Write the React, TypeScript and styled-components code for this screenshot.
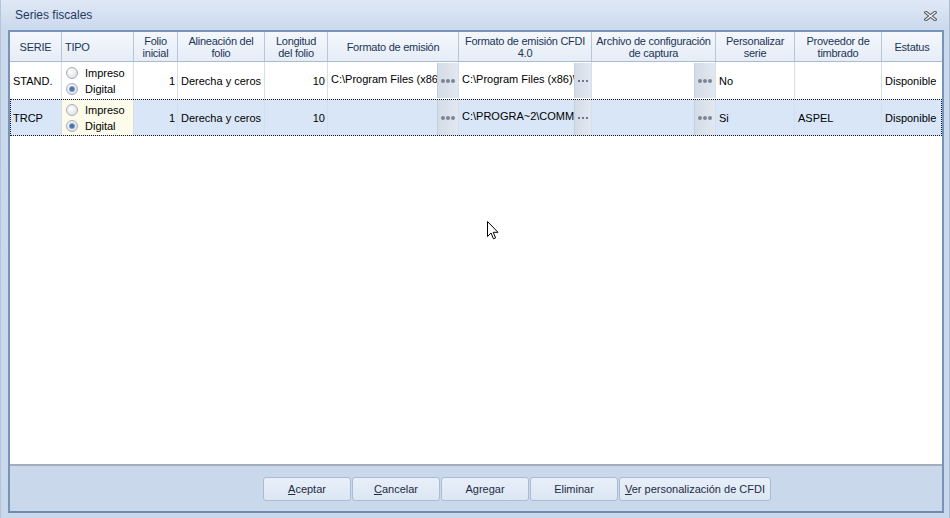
import React from 'react';
import styled, { createGlobalStyle, css } from 'styled-components';

const GlobalStyle = createGlobalStyle`
  html, body {
    margin: 0;
    padding: 0;
    background: #c9d8ec;
  }
  * {
    box-sizing: border-box;
  }
`;

// column widths of the grid, the last one takes what is left
const COLS = '52px 72px 44px 87px 63px 131px 133px 124px 79px 87px 1fr';

const WindowStyled = styled.div`
  position: relative;
  width: 950px;
  height: 518px;
  display: flex;
  flex-direction: column;
  background: linear-gradient(#dfe8f5 0px, #cbd9ed 30px, #cad8ec 100%);
  border-left: 1px solid #b4c4da;
  border-right: 1px solid #a9bbd3;
  font-family: 'Liberation Sans', Arial, sans-serif;
  font-size: 11px;
  color: #000;
  overflow: hidden;
`;

const TitleBar = styled.div`
  height: 30px;
  flex: none;
  display: flex;
  align-items: center;
  justify-content: space-between;
  padding: 0 12px 0 14px;
`;

const Title = styled.span`
  font-size: 12px;
  color: #1e3a5f;
  margin-top: -1px;
`;

const CloseButton = styled.div`
  width: 14px;
  height: 12px;
  display: flex;
  align-items: center;
  justify-content: center;
  margin-top: 2px;
`;

const Frame = styled.div`
  flex: 1;
  margin: 0 5px 5px 7px;
  border: 2px solid #7893b8;
  border-bottom-color: #6f8ab0;
  display: flex;
  flex-direction: column;
  min-height: 0;
`;

const GridArea = styled.div`
  flex: 1;
  background: #fff;
  border-bottom: 2px solid #a4adb9;
  display: flex;
  flex-direction: column;
`;

const Row = styled.div<{ $head?: boolean; $selected?: boolean }>`
  display: grid;
  grid-template-columns: ${COLS};
  height: ${({ $head }) => ($head ? '30px' : '37px')};
  ${({ $head }) =>
    $head &&
    css`
      background: linear-gradient(#f4f7fc, #e6edf7);
      border-bottom: 1px solid #a9bbd2;
      color: #1c3557;
    `}
  ${({ $selected }) =>
    $selected &&
    css`
      background: #d9e6f7;
      outline: 1px dotted #1a1a1a;
      outline-offset: -1px;
    `}
`;

const HeadCell = styled.div<{ $left?: boolean }>`
  display: flex;
  align-items: center;
  justify-content: ${({ $left }) => ($left ? 'flex-start' : 'center')};
  text-align: ${({ $left }) => ($left ? 'left' : 'center')};
  padding: 0 3px;
  line-height: 12px;
  letter-spacing: -0.25px;
  border-right: 1px solid #b7c6da;
  white-space: pre;
  overflow: hidden;
  &:last-child {
    border-right: none;
  }
`;

const Cell = styled.div<{ $align?: 'left' | 'right'; $focus?: boolean }>`
  display: flex;
  align-items: center;
  justify-content: ${({ $align }) => ($align === 'right' ? 'flex-end' : 'flex-start')};
  padding: 0 2px 0 3px;
  border-right: 1px solid #d5dfec;
  white-space: nowrap;
  overflow: hidden;
  min-width: 0;
  ${({ $focus }) =>
    $focus &&
    css`
      background: #fdfbea;
      margin: 1px 0;
    `}
  &:last-child {
    border-right: none;
  }
`;

const PathCell = styled.div`
  display: flex;
  align-items: stretch;
  border-right: 1px solid #d5dfec;
  min-width: 0;
  overflow: hidden;
`;

const PathText = styled.span`
  flex: 1;
  min-width: 0;
  overflow: hidden;
  white-space: nowrap;
  text-overflow: clip;
  line-height: 35px;
  padding-left: 3px;
`;

const EllipsisButton = styled.div<{ $tall?: boolean }>`
  width: ${({ $tall }) => ($tall ? '21px' : '17px')};
  flex: none;
  display: flex;
  align-items: center;
  justify-content: center;
  gap: ${({ $tall }) => ($tall ? '1px' : '2px')};
  background: linear-gradient(90deg, #d4dce8, #e2e8f0);
  border-left: 1px solid #c3cedc;
  margin: 1px 0;
`;

const Dot = styled.i<{ $dark?: boolean }>`
  display: block;
  width: ${({ $dark }) => ($dark ? '2px' : '4px')};
  height: ${({ $dark }) => ($dark ? '2px' : '4px')};
  border-radius: 50%;
  background: ${({ $dark }) => ($dark ? '#485467' : '#7c8594')};
`;

const RadioGroup = styled.div`
  display: flex;
  flex-direction: column;
  gap: 3px;
  padding-left: 1px;
`;

const RadioLine = styled.label`
  display: flex;
  align-items: center;
  gap: 7px;
  height: 13px;
`;

const Footer = styled.div`
  height: 45px;
  flex: none;
  display: flex;
  align-items: center;
  padding: 1px 0 0 253px;
  gap: 1px;
`;

const Button = styled.button<{ $wide?: boolean }>`
  width: ${({ $wide }) => ($wide ? '152px' : '88px')};
  height: 24px;
  font-family: 'Liberation Sans', Arial, sans-serif;
  font-size: 11px;
  color: #1d2c44;
  background: linear-gradient(#e8eff9, #dce6f4);
  border: 1px solid #aabcd4;
  border-radius: 3px;
  padding: 0;
  u {
    text-decoration: underline;
  }
`;

const Cursor = styled.svg`
  position: absolute;
  left: 486px;
  top: 221px;
`;

function Radio({ checked }: { checked?: boolean }) {
  return (
    <svg width="12" height="12" viewBox="0 0 12 12">
      <defs>
        <radialGradient id={checked ? 'rOn' : 'rOff'} cx="0.4" cy="0.4" r="0.7">
          <stop offset="0" stopColor="#ffffff" />
          <stop offset="1" stopColor={checked ? '#d4dbe4' : '#d9dde2'} />
        </radialGradient>
      </defs>
      <circle cx="6" cy="6" r="5.5" fill={`url(#${checked ? 'rOn' : 'rOff'})`} stroke="#a7aeb8" />
      {checked && <circle cx="6" cy="6" r="2.6" fill="#4c72ad" stroke="#7f9dca" strokeWidth="0.8" />}
    </svg>
  );
}

function Tipo({ focus }: { focus?: boolean }) {
  return (
    <Cell $focus={focus}>
      <RadioGroup>
        <RadioLine>
          <Radio />
          Impreso
        </RadioLine>
        <RadioLine>
          <Radio checked />
          Digital
        </RadioLine>
      </RadioGroup>
    </Cell>
  );
}

function Ellipsis({ dark }: { dark?: boolean }) {
  return (
    <EllipsisButton $tall={!dark}>
      <Dot $dark={dark} />
      <Dot $dark={dark} />
      <Dot $dark={dark} />
    </EllipsisButton>
  );
}

function PathField({ value, dark }: { value: string; dark?: boolean }) {
  return (
    <PathCell>
      <PathText>{value}</PathText>
      <Ellipsis dark={dark} />
    </PathCell>
  );
}

const headers: { text: string; left?: boolean }[] = [
  { text: 'SERIE' },
  { text: 'TIPO', left: true },
  { text: 'Folio\ninicial' },
  { text: 'Alineación del\nfolio' },
  { text: 'Longitud\ndel folio' },
  { text: 'Formato de emisión' },
  { text: 'Formato de emisión CFDI\n4.0' },
  { text: 'Archivo de configuración\nde captura' },
  { text: 'Personalizar\nserie' },
  { text: 'Proveedor de\ntimbrado' },
  { text: 'Estatus' },
];

type Serie = {
  serie: string;
  folio: number;
  alineacion: string;
  longitud: number;
  formato: string;
  cfdi: string;
  archivo: string;
  personalizar: string;
  proveedor: string;
  estatus: string;
};

const series: Serie[] = [
  {
    serie: 'STAND.',
    folio: 1,
    alineacion: 'Derecha y ceros',
    longitud: 10,
    formato: 'C:\\Program Files (x86)\\Common Files\\Aspel\\Sistemas Aspel\\SAE8.00\\FORMATOS\\factura.fto',
    cfdi: 'C:\\Program Files (x86)\\Common Files\\Aspel\\Sistemas Aspel\\SAE8.00\\FORMATOS\\cfdi40.fto',
    archivo: '',
    personalizar: 'No',
    proveedor: '',
    estatus: 'Disponible',
  },
  {
    serie: 'TRCP',
    folio: 1,
    alineacion: 'Derecha y ceros',
    longitud: 10,
    formato: '',
    cfdi: 'C:\\PROGRA~2\\COMMON~1\\Aspel\\SISTEM~1\\SAE8.00\\FORMATOS\\cp40.fto',
    archivo: '',
    personalizar: 'Si',
    proveedor: 'ASPEL',
    estatus: 'Disponible',
  },
];

export default function App() {
  return (
    <>
      <GlobalStyle />
      <WindowStyled>
        <TitleBar>
          <Title>Series fiscales</Title>
          <CloseButton>
            <svg width="13" height="10" viewBox="0 0 13 10">
              <path d="M2 1.5 L11 8.5 M11 1.5 L2 8.5" stroke="#50565f" strokeWidth="3.4" strokeLinecap="square" />
              <path d="M2 1.5 L11 8.5 M11 1.5 L2 8.5" stroke="#f4f6f9" strokeWidth="1.3" strokeLinecap="square" />
            </svg>
          </CloseButton>
        </TitleBar>

        <Frame>
          <GridArea>
            <Row $head>
              {headers.map((h) => (
                <HeadCell key={h.text} $left={h.left}>
                  {h.text}
                </HeadCell>
              ))}
            </Row>
            {series.map((s, i) => (
              <Row key={s.serie} $selected={i === 1}>
                <Cell>{s.serie}</Cell>
                <Tipo focus={i === 1} />
                <Cell $align="right">{s.folio}</Cell>
                <Cell>{s.alineacion}</Cell>
                <Cell $align="right">{s.longitud}</Cell>
                <PathField value={s.formato} />
                <PathField value={s.cfdi} dark />
                <PathField value={s.archivo} />
                <Cell>{s.personalizar}</Cell>
                <Cell>{s.proveedor}</Cell>
                <Cell>{s.estatus}</Cell>
              </Row>
            ))}
          </GridArea>

          <Footer>
            <Button>
              <u>A</u>ceptar
            </Button>
            <Button>
              <u>C</u>ancelar
            </Button>
            <Button>Agregar</Button>
            <Button>Eliminar</Button>
            <Button $wide>
              <u>V</u>er personalización de CFDI
            </Button>
          </Footer>
        </Frame>

        <Cursor width="12" height="19" viewBox="0 0 12 19">
          <path d="M0.5 0.5 L0.5 15.5 L4 12 L6.5 17.8 L8.6 16.9 L6.2 11.3 L11 11.3 Z" fill="#fff" stroke="#000" strokeWidth="1" />
        </Cursor>
      </WindowStyled>
    </>
  );
}
